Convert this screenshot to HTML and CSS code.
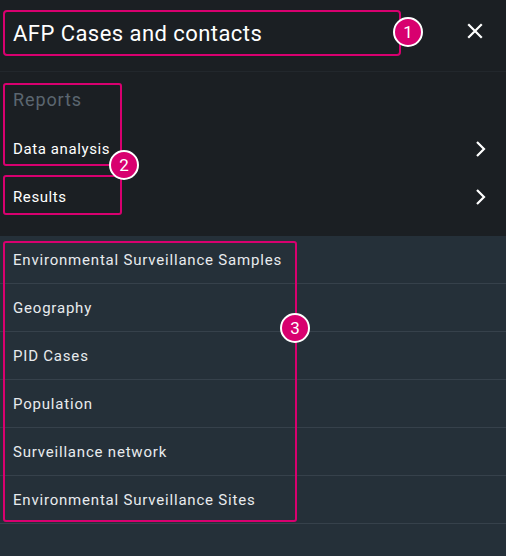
FILE: index.html
```html
<!DOCTYPE html>
<html>
<head>
<meta charset="utf-8">
<link rel="stylesheet" href="styles.css">
</head>
<body>
<div class="panel">
  <header class="header">
    <div class="title-box">
      <h1 class="title">AFP Cases and contacts</h1>
      <span class="badge badge-1">1</span>
    </div>
    <button class="close" aria-label="Close">
      <svg width="16" height="16" viewBox="0 0 16 16"><path d="M2 2 L14 14 M14 2 L2 14" stroke="#fff" stroke-width="2.2" stroke-linecap="square"/></svg>
    </button>
  </header>

  <section class="reports">
    <div class="reports-label">Reports</div>
    <div class="nav-row">
      <span>Data analysis</span>
      <svg class="chev" width="12" height="18" viewBox="0 0 12 18"><path d="M2 2 L9 9 L2 16" fill="none" stroke="#fff" stroke-width="2.2"/></svg>
    </div>
    <div class="nav-row">
      <span>Results</span>
      <svg class="chev" width="12" height="18" viewBox="0 0 12 18"><path d="M2 2 L9 9 L2 16" fill="none" stroke="#fff" stroke-width="2.2"/></svg>
    </div>
    <div class="mark mark-2a"></div>
    <div class="mark mark-2b"></div>
    <span class="badge badge-2">2</span>
  </section>

  <section class="list">
    <div class="row">Environmental Surveillance Samples</div>
    <div class="row">Geography</div>
    <div class="row">PID Cases</div>
    <div class="row">Population</div>
    <div class="row">Surveillance network</div>
    <div class="row">Environmental Surveillance Sites</div>
    <div class="mark mark-3"></div>
    <span class="badge badge-3">3</span>
  </section>
</div>
</body>
</html>
```
FILE: styles.css
```css
* { box-sizing: border-box; }
html, body { margin: 0; padding: 0; }
body {
  width: 506px;
  height: 556px;
  background: #253039;
  font-family: Roboto, "Liberation Sans", sans-serif;
  color: #fff;
  overflow: hidden;
}
.panel { display: flex; flex-direction: column; height: 556px; }

.header {
  height: 72px;
  background: #1b1f23;
  border-bottom: 1px solid #22272c;
  display: flex;
  align-items: flex-start;
  padding: 10px 0 0 3px;
}
.title-box {
  position: relative;
  width: 398px;
  height: 46px;
  border: 2px solid #d8006f;
  border-radius: 4px;
  display: flex;
  align-items: center;
  padding-left: 8px;
}
.title {
  margin: 0;
  font-size: 22px;
  font-weight: 400;
  color: #fff;
  letter-spacing: 0.45px;
  padding-top: 1px;
}
.close {
  background: none;
  border: 0;
  padding: 0;
  margin: 13px 0 0 66px;
  width: 16px;
  height: 16px;
  display: flex;
}

.badge {
  position: absolute;
  width: 30px;
  height: 30px;
  border-radius: 50%;
  background: #d8006f;
  border: 2px solid #fff;
  color: #fff;
  font-size: 17px;
  font-weight: 400;
  display: flex;
  align-items: center;
  justify-content: center;
}
.badge-1 { right: -24px; top: 5px; }

.reports {
  position: relative;
  background: #1b1f23;
  padding: 17px 0 20px 13px;
  height: 164px;
}
.reports-label {
  font-size: 18px;
  color: #5b6670;
  height: 22px;
  line-height: 22px;
  margin-bottom: 26px;
  letter-spacing: 0.9px;
}
.nav-row {
  display: flex;
  align-items: center;
  justify-content: space-between;
  height: 48px;
  font-size: 15px;
  font-weight: 400;
  letter-spacing: 0.6px;
  padding-right: 19px;
  margin-top: -12px;
}
.nav-row + .nav-row { margin-top: 0; }

.mark {
  position: absolute;
  border: 2px solid #d8006f;
  border-radius: 3px;
}
.mark-2a { left: 3px; top: 11px; width: 119px; height: 83px; }
.mark-2b { left: 3px; top: 103px; width: 119px; height: 40px; }
.badge-2 { left: 109px; top: 78px; }

.list {
  position: relative;
  background: #253039;
  flex: 1;
}
.row {
  height: 48px;
  border-bottom: 1px solid #36414b;
  display: flex;
  align-items: center;
  padding: 1px 0 0 13px;
  font-size: 15px;
  font-weight: 400;
  letter-spacing: 0.8px;
  color: #e8ebee;
}
.mark-3 { left: 3px; top: 5px; width: 294px; height: 281px; }
.badge-3 { left: 280px; top: 77px; }
```
